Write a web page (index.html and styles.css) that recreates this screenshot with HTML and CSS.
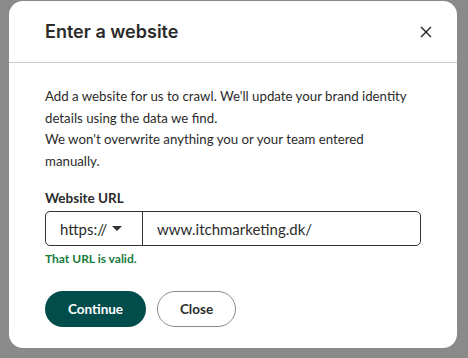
FILE: index.html
```html
<!DOCTYPE html>
<html lang="en">
<head>
	<meta charset="UTF-8">
	<title>Enter a website</title>
	<link rel="stylesheet" href="styles.css">
</head>
<body>
	<div class="modal">
		<div class="modalHead">
			<h3>Enter a website</h3>
			<button class="closeX" aria-label="Close">
				<svg width="12" height="12" viewBox="0 0 12 12"><path d="M1 1L11 11M11 1L1 11" stroke="#222" stroke-width="1.4" fill="none"/></svg>
			</button>
		</div>
		<div class="modalBody">
			<p>Add a website for us to crawl. We'll update your brand identity details using the data we find.</p>
			<p>We won't overwrite anything you or your team entered manually.</p>
			<label class="fieldLabel">Website URL</label>
			<div class="urlField">
				<div class="protocol">https:// <span class="caret"></span></div>
				<div class="urlValue">www.itchmarketing.dk/</div>
			</div>
			<div class="valid">That URL is valid.</div>
			<div class="actions">
				<button class="btn primary">Continue</button>
				<button class="btn secondary">Close</button>
			</div>
		</div>
	</div>
</body>
</html>
```

FILE: styles.css
```css
body,h3,p{
	margin: 0;
	padding: 0;
}
*{
	box-sizing: border-box;
}
body{
	background: #8a8a8a;
	padding: 1px 11px 10px 9px;
	font-family: "Lato", "Liberation Sans", sans-serif;
	color: #2b2b2b;
}
.modal{
	width: 448px;
	height: 347px;
	background: #fff;
	border-radius: 14px;
	overflow: hidden;
}
.modalHead{
	height: 62px;
	border-bottom: 1px solid #ccc;
	display: flex;
	align-items: center;
	justify-content: space-between;
	padding: 0 25px 0 36px;
}
h3{
	font-family: "Inter", sans-serif;
	font-size: 18px;
	font-weight: 600;
	color: #2b2b2b;
}
.closeX{
	border: 0;
	background: none;
	padding: 0;
	display: flex;
}
.modalBody{
	padding: 23px 36px 0;
}
.modalBody p{
	max-width: 368px;
	font-size: 13.25px;
	line-height: 21.5px;
}
.fieldLabel{
	display: block;
	margin-top: 18px;
	font-size: 13.5px;
	font-weight: 700;
}
.urlField{
	margin-top: 5px;
	width: 376px;
	height: 35px;
	border: 1px solid #333;
	border-radius: 5px;
	display: flex;
}
.protocol{
	width: 97px;
	border-right: 1px solid #333;
	display: flex;
	align-items: center;
	padding-left: 14px;
	font-size: 15px;
	gap: 5px;
}
.caret{
	width: 0;
	height: 0;
	border-left: 5px solid transparent;
	border-right: 5px solid transparent;
	border-top: 5px solid #333;
}
.urlValue{
	display: flex;
	align-items: center;
	padding-left: 14px;
	font-size: 15px;
}
.valid{
	margin-top: 5px;
	font-size: 12px;
	font-weight: 700;
	color: #177a3c;
}
.actions{
	margin-top: 25px;
	display: flex;
	gap: 11px;
}
.btn{
	height: 36px;
	border-radius: 18px;
	font-family: inherit;
	font-size: 13.5px;
	font-weight: 700;
	cursor: pointer;
}
.primary{
	width: 101px;
	background: #014d4b;
	color: #fff;
	border: 0;
}
.secondary{
	width: 79px;
	background: #fff;
	color: #2b2b2b;
	border: 1px solid #8a8a8a;
}
```
